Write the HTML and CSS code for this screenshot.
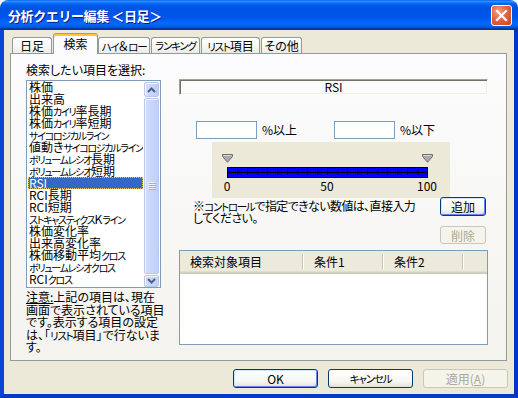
FILE: index.html
```html
<!DOCTYPE html>
<html lang="ja">
<head>
<meta charset="utf-8">
<title>分析クエリー編集</title>
<link rel="stylesheet" href="styles.css">
</head>
<body>
<div class="window">
  <div class="titlebar">
    <span class="title">分析クエリー編集 ＜日足＞</span>
    <span class="close"><svg width="19" height="19" viewBox="0 0 19 19"><path d="M5 5L14 14M14 5L5 14" stroke="#fff" stroke-width="2.2" stroke-linecap="square" fill="none"/></svg></span>
  </div>
  <div class="client">
    <div class="tabs">
      <div class="tab w40">日足</div>
      <div class="tab tab-sel w45">検索</div>
      <div class="tab w52"><span class="k">ハイ</span>＆<span class="k">ロー</span></div>
      <div class="tab w49"><span class="k">ランキング</span></div>
      <div class="tab w59"><span class="k">リスト</span>項目</div>
      <div class="tab w41">その他</div>
    </div>
    <div class="panel">
      <div class="col-left">
        <div class="label">検索したい項目を選択:</div>
        <div class="listbox">
          <ul class="items">
            <li>株価</li>
            <li>出来高</li>
            <li>株価<span class="k">カイリ</span>率長期</li>
            <li>株価<span class="k">カイリ</span>率短期</li>
            <li><span class="k">サイコロジカルライン</span></li>
            <li>値動き<span class="k">サイコロジカルライン</span></li>
            <li><span class="k">ボリュームレシオ</span>長期</li>
            <li><span class="k">ボリュームレシオ</span>短期</li>
            <li class="sel">RSI</li>
            <li>RCI長期</li>
            <li>RCI短期</li>
            <li><span class="k">ストキャスティクス</span>K<span class="k">ライン</span></li>
            <li>株価変化率</li>
            <li>出来高変化率</li>
            <li>株価移動平均<span class="k">クロス</span></li>
            <li><span class="k">ボリュームレシオクロス</span></li>
            <li>RCI<span class="k">クロス</span></li>
            <li><span class="k">ストキャスティクスクロス</span></li>
          </ul>
          <div class="scrollbar">
            <div class="sb-btn sb-up"><svg width="9" height="6" viewBox="0 0 9 6"><path d="M1 5L4.5 1.5L8 5" stroke="#4D6185" stroke-width="2" fill="none"/></svg></div>
            <div class="sb-thumb"><svg width="8" height="8" viewBox="0 0 8 8"><path d="M0 0.5H7M0 2.5H7M0 4.5H7M0 6.5H7" stroke="#EEF4FE"/><path d="M1 1.5H8M1 3.5H8M1 5.5H8M1 7.5H8" stroke="#8CB0F8"/></svg></div>
            <div class="sb-btn sb-down"><svg width="9" height="6" viewBox="0 0 9 6"><path d="M1 1L4.5 4.5L8 1" stroke="#4D6185" stroke-width="2" fill="none"/></svg></div>
          </div>
        </div>
        <div class="caution">
          <div><u>注意:</u>上記の項目は、現在</div>
          <div>画面で表示されている項目</div>
          <div>です。表示する項目の設定</div>
          <div>は、「<span class="k">リスト</span>項目」で行ないま</div>
          <div>す。</div>
        </div>
      </div>
      <div class="col-right">
        <div class="rsi">RSI</div>
        <div class="range-row">
          <span class="field field-a"></span>
          <span class="unit">%以上</span>
          <span class="field"></span>
          <span class="unit">%以下</span>
        </div>
        <div class="slider">
          <div class="thumbs">
            <svg width="11" height="9" viewBox="0 0 11 9"><path d="M0.5 0.5H10.5V2.5L5.5 8.3L0.5 2.5Z" fill="#A9A8AC" stroke="#6E6E72"/><path d="M1.5 1.5H9.5" stroke="#D8D8DA"/></svg>
            <svg width="11" height="9" viewBox="0 0 11 9"><path d="M0.5 0.5H10.5V2.5L5.5 8.3L0.5 2.5Z" fill="#A9A8AC" stroke="#6E6E72"/><path d="M1.5 1.5H9.5" stroke="#D8D8DA"/></svg>
          </div>
          <svg class="bar" width="201" height="11" viewBox="0 0 201 11">
            <rect x="0.5" y="0.5" width="200" height="10" fill="#0000FF" stroke="#000"/>
            <path d="M1 5.5H200" stroke="#000"/>
            <path d="M10.5 3V8M20.5 3V8M30.5 3V8M40.5 3V8M50.5 3V8M60.5 3V8M70.5 3V8M80.5 3V8M90.5 3V8M100.5 3V8M110.5 3V8M120.5 3V8M130.5 3V8M140.5 3V8M150.5 3V8M160.5 3V8M170.5 3V8M180.5 3V8M190.5 3V8" stroke="#000"/>
          </svg>
          <div class="scale"><span>0</span><span>50</span><span>100</span></div>
        </div>
        <div class="note-row">
          <div class="note">
            <div>※<span class="k">コントロール</span>で指定できない数値は、直接入力</div>
            <div>してください。</div>
          </div>
          <div class="side-btns">
            <span class="btn btn-focus btn-add">追加</span>
            <span class="btn btn-off btn-del">削除</span>
          </div>
        </div>
        <div class="listview">
          <div class="lv-head">
            <span class="lv-col c1">検索対象項目</span><span class="lv-sep"></span>
            <span class="lv-col c2">条件1</span><span class="lv-sep"></span>
            <span class="lv-col c2">条件2</span><span class="lv-sep"></span>
          </div>
        </div>
      </div>
    </div>
    <div class="footer">
      <span class="btn btn-focus btn-main">OK</span>
      <span class="btn btn-main"><span class="k">キャンセル</span></span>
      <span class="btn btn-off btn-main">適用(<u>A</u>)</span>
    </div>
  </div>
</div>
</body>
</html>
```
FILE: styles.css
```css
* { box-sizing: border-box; }

html, body {
  margin: 0;
  background: #ffffff;
}

body {
  font-family: "Noto Sans CJK JP", "Noto Sans", sans-serif;
  font-size: 12px;
  line-height: 12px;
  color: #000;
  font-feature-settings: "palt";
}

/* narrow katakana, like the proportional UI font */
.k {
  font-size: 10.5px;
  letter-spacing: -1.2px;
}

.window {
  width: 518px;
  height: 398px;
  display: flex;
  flex-direction: column;
  border-radius: 8px 8px 0 0;
  overflow: hidden;
  background: #ECE9D8;
}

.titlebar {
  height: 30px;
  flex: none;
  display: flex;
  align-items: center;
  padding: 0 6px 0 8px;
  background: linear-gradient(to bottom, #0058EE 0%, #3593FF 4%, #288EFF 6%, #127DFF 8%, #036FFC 10%, #0262EE 14%, #0057E5 20%, #0054E3 24%, #0055EB 56%, #005BF5 66%, #026AFE 76%, #0062EF 86%, #0052D6 92%, #0040AB 94%, #003092 100%);
}

.title {
  flex: 1;
  color: #fff;
  font-weight: bold;
  font-size: 13px;
  line-height: 14px;
  text-shadow: 1px 1px #0A1C8C;
  margin-top: 1px;
  font-feature-settings: normal;
  letter-spacing: -0.4px;
}

.close {
  width: 21px;
  height: 21px;
  border: 1px solid #fff;
  border-radius: 3px;
  background: radial-gradient(circle at 35% 30%, #F2A384 0%, #E4643F 45%, #C9431F 100%);
  display: flex;
  margin-top: 1px;
}

.client {
  flex: 1;
  display: flex;
  flex-direction: column;
  border: 4px solid #0A45D7;
  border-top: 0;
  border-right-color: #0733C4;
  border-bottom-color: #0838C9;
  padding: 3px 7px 0 6px;
}

/* tabs */
.tabs {
  height: 20px;
  display: flex;
  align-items: flex-end;
  margin-left: 2px;
  position: relative;
  z-index: 1;
}

.tab {
  height: 16px;
  margin-right: 1px;
  border: 1px solid #919B9C;
  border-bottom: 0;
  border-radius: 3px 3px 0 0;
  background: linear-gradient(#FFFFFF, #F7F7F4 60%, #EBEAE3);
  display: flex;
  justify-content: center;
  align-items: baseline;
  padding-top: 2px;
  white-space: nowrap;
}

.tab-sel {
  height: 21px;
  margin-bottom: -1px;
  margin-right: 0;
  border-top: 1px solid #E68B2C;
  box-shadow: inset 0 2px #FFC73C;
  background: #FCFCFE;
  padding-top: 4px;
}

.w40 { width: 40px; }
.w45 { width: 45px; }
.w52 { width: 52px; }
.w49 { width: 49px; }
.w59 { width: 59px; }
.w41 { width: 41px; }

/* panel */
.panel {
  height: 308px;
  flex: none;
  border: 1px solid #919B9C;
  background: linear-gradient(#FCFCFE, #F4F3EE);
  display: flex;
  gap: 18px;
  padding: 10px 0 0 15px;
}

.col-left {
  width: 135px;
  flex: none;
  display: flex;
  flex-direction: column;
}

.label { height: 12px; white-space: nowrap; }

.listbox {
  margin-top: 4px;
  height: 208px;
  flex: none;
  border: 1px solid #7F9DB9;
  background: #fff;
  display: flex;
}

.items {
  flex: 1;
  margin: 0;
  padding: 0 0 0 1px;
  list-style: none;
  overflow: hidden;
}

.items li {
  height: 12px;
  line-height: 12px;
  padding-left: 1px;
  white-space: nowrap;
  overflow: hidden;
}

.items .k {
  font-size: 10px;
  letter-spacing: -1.3px;
}

.items li.sel {
  background: #316AC5;
  color: #fff;
  outline: 1px dotted #E9C36A;
  outline-offset: -1px;
}

.scrollbar {
  width: 17px;
  flex: none;
  display: flex;
  flex-direction: column;
  gap: 1px;
  padding: 1px 1px 0 1px;
  background: #FDFDFC;
}

.sb-btn, .sb-thumb {
  border: 1px solid #B7C9F1;
  border-radius: 2px;
  background: linear-gradient(to right, #D3DEFC, #BDCEF8);
  box-shadow: inset 1px 1px #F0F4FE;
  display: flex;
  justify-content: center;
  align-items: center;
}

.sb-up { height: 15px; }
.sb-down { height: 12px; }
.sb-thumb { flex: 1; }

.caution {
  margin-top: 3px;
  white-space: nowrap;
  display: flex;
  flex-direction: column;
}

.caution div {
  height: 12.5px;
  flex: none;
  line-height: 12.5px;
}

.caution u { text-underline-offset: 1px; }

/* right column */
.col-right {
  width: 309px;
  flex: none;
  display: flex;
  flex-direction: column;
}

.rsi {
  margin-top: 15px;
  height: 16px;
  border: 1px solid;
  border-color: #A5A292 #FFFFFF #FFFFFF #A5A292;
  box-shadow: inset 1px 1px #716F64, inset -1px -1px #F1EFE2;
  text-align: center;
  line-height: 14px;
}

.range-row {
  margin-top: 26px;
  height: 18px;
  display: flex;
  align-items: center;
}

.field {
  width: 61px;
  height: 18px;
  border: 1px solid #7F9DB9;
  background: #fff;
}

.field-a { margin-left: 17px; }

.unit {
  width: 77px;
  padding-left: 5px;
}

.slider {
  margin: 3px 0 0 33px;
  width: 238px;
  height: 56px;
  background: #ECE9D8;
  padding-top: 12px;
}

.thumbs {
  width: 211px;
  margin-left: 10px;
  height: 9px;
  display: flex;
  justify-content: space-between;
}

.thumbs svg, .bar { display: block; }

.bar { margin: 4px 0 0 15px; }

.scale {
  width: 220px;
  margin: 2px 0 0 5px;
  display: flex;
  justify-content: space-between;
}

.scale span {
  width: 20px;
  text-align: center;
}

.note-row {
  margin-top: -1px;
  display: flex;
}

.note {
  margin: 0 0 0 14px;
  padding-top: 3px;
  white-space: nowrap;
  letter-spacing: -0.6px;
}

.note .k { letter-spacing: -1.3px; }

.note div { height: 12px; }

.side-btns {
  margin-left: auto;
  margin-right: 2px;
  width: 46px;
  display: flex;
  flex-direction: column;
  gap: 10px;
}

.btn {
  display: flex;
  justify-content: center;
  align-items: baseline;
  padding-top: 3px;
  border: 1px solid #003C74;
  border-radius: 3px;
  background: linear-gradient(#FFFFFF, #F5F5F1 70%, #E3E1D8);
  color: #000;
  white-space: nowrap;
}

.btn-focus {
  box-shadow: inset 1px 1px #CEE7FF, inset -1px -1px #6982EE;
}

.btn-off {
  border-color: #C9C7BA;
  background: #F5F4EA;
  color: #ACA899;
  box-shadow: none;
}

.btn-add { height: 19px; }
.btn-del { height: 18px; }

.listview {
  margin-top: 6px;
  height: 95px;
  border: 1px solid #7F9DB9;
  background: #fff;
}

.lv-head {
  height: 20px;
  display: flex;
  align-items: center;
  background: #EBEADB;
  box-shadow: 0 1px #E2DECD, 0 2px #D6D2C2, 0 3px #CBC7B8;
}

.lv-col {
  padding: 1px 0 0 10px;
}

.c1 { width: 122px; }
.c2 { width: 78px; }

.lv-sep {
  width: 2px;
  height: 15px;
  border-left: 1px solid #C7C5B2;
  border-right: 1px solid #FFFFFF;
}

.footer {
  margin-top: 8px;
  margin-right: -1px;
  display: flex;
  justify-content: flex-end;
  gap: 10px;
}

.btn-main {
  width: 85px;
  height: 19px;
}
```
